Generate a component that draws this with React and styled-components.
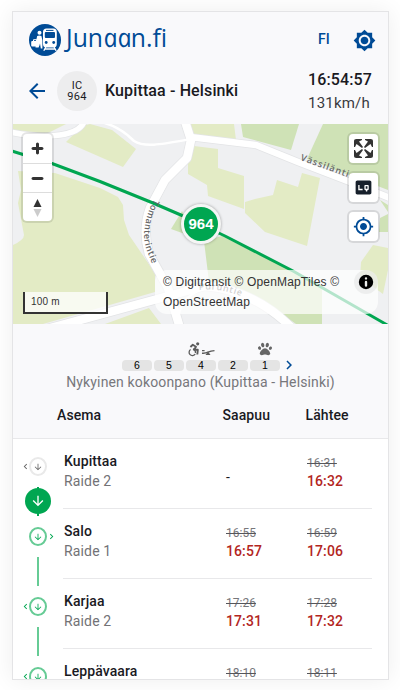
import React from "react";
import styled, { createGlobalStyle } from "styled-components";
import { FaPaw } from "react-icons/fa";
import { MdArrowBack, MdArrowDownward, MdBrightness7, MdChevronLeft, MdChevronRight, MdMyLocation } from "react-icons/md";

const BLUE = "#004b96";
const GREEN = "#00a651";

const GlobalStyle = createGlobalStyle`
  * { box-sizing: border-box; }
  body { margin: 0; background: #fff; font-family: Roboto, sans-serif; color: #1a1a1f; height: 690px; overflow: hidden; }
  svg { display: block; flex: none; }
`;

const Card = styled.main`
  width: 377px;
  height: 669px;
  margin: 11px 0 0 12px;
  border: 1px solid #e4e4e6;
  background: #fff;
  overflow: hidden;
  box-shadow: 0 0 22px rgba(0, 0, 0, 0.07);
`;

const Header = styled.header`
  height: 112px;
  background: #f9f9fb;
`;

const TopBar = styled.div`
  height: 56px;
  padding: 0 12px 0 16px;
  display: flex;
  align-items: center;
`;

const Brand = styled.div`
  display: flex;
  align-items: center;
  gap: 5px;
  color: ${BLUE};
`;

const Wordmark = styled.span`
  font: 400 26px/32px "Open Sans", sans-serif;
  transform: scaleX(0.95);
  transform-origin: left;
  white-space: nowrap;
  margin-top: -7px;
`;

const Upright = styled.em`
  display: inline-block;
  transform: skewX(12deg);
`;

const Language = styled.button`
  margin: -2px 23px 0 auto;
  padding: 0;
  border: 0;
  background: none;
  color: ${BLUE};
  font: 500 14px/20px Roboto, sans-serif;
  letter-spacing: 0.2px;
`;

const TrainBar = styled.div`
  height: 46px;
  padding: 0 16px 0 12px;
  display: flex;
  align-items: center;
`;

const TrainBadge = styled.div`
  width: 40px;
  height: 40px;
  margin: 0 8px;
  border-radius: 50%;
  background: #ededee;
  display: flex;
  flex-direction: column;
  justify-content: center;
  text-align: center;
  font-size: 11px;
  line-height: 11px;
  letter-spacing: 0.25px;
`;

const Route = styled.h1`
  margin: -1px 0 0;
  font-size: 16px;
  font-weight: 500;
  line-height: 24px;
  letter-spacing: 0.13px;
`;

const Status = styled.div`
  width: 64px;
  margin: -1px 0 0 auto;
  font-size: 16px;
  line-height: 24px;
  font-weight: 500;
  letter-spacing: 0.13px;
  white-space: nowrap;
`;

const Speed = styled.div`
  font-size: 15px;
  line-height: 22px;
  font-weight: 400;
  letter-spacing: 0.2px;
  color: #3b3b40;
`;

const MapArea = styled.section`
  position: relative;
  height: 200px;
`;

const Controls = styled.div`
  position: absolute;
  top: 10px;
  ${(p) => (p.$side === "left" ? "left: 10px;" : "right: 10px;")}
  display: flex;
  flex-direction: column;
  gap: 10px;
`;

const ControlGroup = styled.div`
  border-radius: 4px;
  background: #fff;
  box-shadow: 0 0 0 2px rgba(0, 0, 0, 0.1);
`;

const ControlButton = styled.button`
  width: 29px;
  height: 29px;
  padding: 0;
  border: 0;
  background: none;
  color: ${BLUE};
  display: flex;
  align-items: center;
  justify-content: center;
  & + & { border-top: 1px solid #ddd; }
`;

const TrainMarker = styled.div`
  position: absolute;
  left: 168px;
  top: 80px;
  width: 40px;
  height: 40px;
  border: 3px solid #f5f6f5;
  border-radius: 50%;
  background: ${GREEN};
  box-shadow: 0 0 3px rgba(0, 0, 0, 0.35);
  color: #fff;
  font: 700 15px/34px "Liberation Sans", sans-serif;
  text-align: center;
`;

const Scale = styled.div`
  position: absolute;
  left: 10px;
  bottom: 10px;
  width: 85px;
  height: 22px;
  padding: 0 6px;
  border: 2px solid #333;
  border-top: 0;
  background: rgba(255, 255, 255, 0.75);
  color: #333;
  font: 10px/19px "Liberation Sans", sans-serif;
  letter-spacing: 0.2px;
`;

const Attribution = styled.div`
  position: absolute;
  right: 10px;
  bottom: 10px;
  width: 223px;
  height: 44px;
  padding: 2px 0 2px 8px;
  border-radius: 12px;
  background: rgba(255, 255, 255, 0.7);
  color: #333;
  display: flex;
  justify-content: space-between;
  font: 12px/20px "Liberation Sans", sans-serif;
  letter-spacing: 0.18px;
`;

const InfoIcon = styled.svg`
  margin-top: -2px;
`;

const Composition = styled.section`
  height: 69px;
  padding-top: 16px;
  background: #f9f9fb;
`;

const Wagons = styled.div`
  height: 31px;
  padding-left: 109px;
  display: flex;
  align-items: flex-end;
  gap: 2px;
`;

const Wagon = styled.div`
  width: 30px;
  display: flex;
  flex-direction: column;
  align-items: center;
`;

const WagonIcons = styled.div`
  height: 18px;
  color: #666;
  display: flex;
  align-items: flex-start;
  justify-content: center;
`;

const WagonNumber = styled.div`
  width: 30px;
  height: 11px;
  border-radius: 4px;
  background: #e4e4e4;
  color: #000;
  text-align: center;
  font: 10.5px/11px "Liberation Sans", sans-serif;
`;

const NextWagons = styled.div`
  width: 12px;
  height: 18px;
  margin: 0 0 -3px 1px;
  color: ${BLUE};
  display: flex;
  justify-content: center;
`;

const Caption = styled.p`
  margin: 0;
  text-align: center;
  font-size: 14px;
  line-height: 22px;
  letter-spacing: 0.14px;
  color: #77777b;
`;

const StationHeader = styled.div`
  height: 46px;
  padding-left: 44px;
  border-bottom: 1px solid #e8e8ea;
  background: #f9f9fb;
  display: grid;
  grid-template-columns: 165.5px 83px 1fr;
  font-size: 14px;
  font-weight: 500;
  line-height: 44px;
  letter-spacing: 0.1px;
`;

const Stop = styled.div`
  height: 70px;
  display: grid;
  grid-template-columns: 50px 309px;
`;

const Rail = styled.div`
  position: relative;
`;

const Dot = styled.div`
  position: absolute;
  left: 16px;
  top: 18px;
  width: 18px;
  height: 19px;
  border: 2px solid ${(p) => (p.$past ? "#e9e9e9" : "#66cb95")};
  border-radius: 50%;
  color: ${(p) => (p.$past ? "#666" : GREEN)};
  display: flex;
  align-items: center;
  justify-content: center;
`;

const Door = styled.div`
  position: absolute;
  left: ${(p) => (p.$right ? 33 : 7)}px;
  top: 22px;
  color: ${(p) => (p.$past ? "#666" : GREEN)};
`;

const Track = styled.div`
  position: absolute;
  left: 24px;
  top: 48px;
  width: 2px;
  height: 29px;
  background: #66cb95;
`;

const Current = styled.div`
  position: absolute;
  z-index: 1;
  left: 12px;
  top: 49px;
  width: 26px;
  height: 26px;
  border-radius: 50%;
  background: ${GREEN};
  color: #fff;
  display: flex;
  align-items: center;
  justify-content: center;
  &::before {
    content: "";
    position: absolute;
    z-index: -1;
    left: 12px;
    top: -1px;
    width: 2px;
    height: 29px;
    background: ${GREEN};
  }
`;

const StopBody = styled.div`
  padding: 12px 0 0 1px;
  border-bottom: 1px solid #e8e8ea;
  display: grid;
  grid-template-columns: 162px 81px 1fr;
`;

const Station = styled.div`
  font-size: 14px;
  line-height: 20px;
  font-weight: 500;
  letter-spacing: 0.1px;
`;

const Platform = styled.div`
  font-size: 14px;
  line-height: 20px;
  letter-spacing: 0.15px;
  font-weight: 400;
  color: #727276;
`;

const Times = styled.div`
  padding-top: 3px;
`;

const Planned = styled.div`
  font-size: 12px;
  line-height: 18px;
  color: #77777b;
  text-decoration: line-through;
  text-decoration-color: #55555a;
`;

const Actual = styled.div`
  font-size: 14px;
  line-height: 19px;
  font-weight: 500;
  letter-spacing: 0.1px;
  color: #b3261e;
`;

const NoTime = styled.div`
  padding-top: 16px;
  font-size: 14px;
  line-height: 20px;
`;

const Logo = () => (
  <svg width="32" height="32" viewBox="0 0 32 32">
    <circle cx="16" cy="16" r="16" fill={BLUE} />
    <circle cx="10.5" cy="8.7" r="2" fill="#fff" />
    <path d="M8.2 12q2-1.2 4.2 0l1 4.3v8.1h-1.6l-.8-5-1.4 4H6.5L7 17z" fill="#fff" />
    <rect x="2.2" y="17" width="8" height="5.4" rx="1" fill="#fff" />
    <path d="M4.5 17.2v-1.5h3.2v1.5" stroke="#fff" fill="none" />
    <rect x="14" y="4.6" width="13.8" height="18.8" rx="3.5" fill="#fff" />
    <path d="M17 6.4h7.5" stroke={BLUE} />
    <rect x="15.8" y="8" width="10.2" height="6" rx="1" fill={BLUE} />
    <circle cx="17.2" cy="18.5" r="1.4" fill={BLUE} />
    <circle cx="24.7" cy="18.5" r="1.4" fill={BLUE} />
    <path d="M16.8 23l-2 3.8M25 23l2.2 3.8M15.5 25h11.2" stroke="#fff" strokeWidth="1.3" />
  </svg>
);

const CityMap = () => (
  <svg width="375" height="200" viewBox="13 124 375 200">
    <defs>
      <path id="west-street" d="M154 199Q138 231 148 253L157 277" />
      <path id="east-street" d="M300 160L364 183" />
      <path id="south-street" d="M199 290Q222 287 250 300" />
    </defs>
    <rect x="13" y="124" width="375" height="200" fill="#eff0f2" />
    <g fill="#e3ebc5">
      <path d="M13 124H66L48 133 30 136 13 130z" />
      <path d="M66 142L82 126 90 124 112 130 136 149 123 167z" />
      <path d="M18 171L55 173 100 188 118 197 123 205 124 220 129 235 155 273 155 292 36 326H13V245Q24 240 24 235L18 203 21 190z" />
      <path d="M188 124H234L236 140 192 136z" />
      <path d="M194 146L218 149V168L244 176V209L208 196 207 185 188 174V158z" />
      <path d="M245 202L255 199 273 195 277 180 298 187 302 173 320 178 307 246 265 232 245 213z" />
      <path d="M361 262L373 245 388 248V270L383 294 360 277z" />
      <path d="M105 324L149 308 161 324z" />
    </g>
    <g fill="#cfe2b6">
      <path d="M241 124H299L291 150 243 137z" />
      <path d="M323 124H388V190L307 159z" />
      <path d="M380 200L388 205V212z" />
      <path d="M380 218L388 214V232L379 232z" />
      <path d="M171 229L182 211 196 238z" />
      <path d="M204 241L222 236 322 286V324H296L262 300 210 290z" />
    </g>
    <g fill="none" stroke="#e3e4e6" strokeLinejoin="round">
      <path d="M10 132Q38 138 60 135T85 119" strokeWidth="7" />
      <path d="M184 118L191 140 187 158 165 180 150 208Q142 230 149 254L168 288 180 328" strokeWidth="10" />
      <path d="M190 137L256 145 298 162 350 182 390 198" strokeWidth="8" />
      <path d="M36 332L150 301 205 286Q254 290 293 329" strokeWidth="10" />
    </g>
    <g fill="none" stroke="#fff" strokeLinejoin="round">
      <path d="M10 132Q38 138 60 135T85 119" strokeWidth="5.5" />
      <path d="M101 122Q119 126 134 141C145 148 163 144 191 139" strokeWidth="2.5" />
      <path d="M184 118L191 140 187 158 165 180 150 208Q142 230 149 254L168 288 180 328" strokeWidth="8.5" />
      <path d="M190 137L256 145 298 162 350 182 390 198" strokeWidth="6.5" />
      <path d="M36 332L150 301 205 286Q254 290 293 329" strokeWidth="8.5" />
      <path d="M179 326Q176 300 200 290" strokeWidth="2" />
    </g>
    <path d="M10 150.5L52 163.5 100 181.5 153 203 182 215.5 225 236 293 271 390 326.5" fill="none" stroke={GREEN} strokeWidth="3" strokeLinejoin="round" />
    <g fill="#666" fontFamily="Open Sans, sans-serif" fontSize="9" fontWeight="600">
      <text letterSpacing="0.45"><textPath href="#west-street">Tomanterintie</textPath></text>
      <text letterSpacing="1"><textPath href="#east-street">Vässiläntie</textPath></text>
      <text letterSpacing="0.7"><textPath href="#south-street">Puruntie</textPath></text>
    </g>
  </svg>
);

const Glyph = ({ d, fill = "#333" }) => (
  <svg width="29" height="29" viewBox="0 0 29 29"><path fill={fill} fillRule="evenodd" d={d} /></svg>
);

const LowQuality = () => (
  <svg width="21" height="21" viewBox="0 0 24 24" fill="#17202b">
    <path fillRule="evenodd" d="M19 4H5c-1.11 0-2 .9-2 2v12c0 1.1.89 2 2 2h14c1.1 0 2-.9 2-2V6c0-1.1-.9-2-2-2zm-8 11H6V9h1.5v4.5H11V15zm7-1c0 .55-.45 1-1 1h-.75v1.5h-1.5V15H14c-.55 0-1-.45-1-1v-4c0-.55.45-1 1-1h3c.55 0 1 .45 1 1v4zm-3.5-.5h2v-3h-2v3z" />
  </svg>
);

const Wheelchair = () => (
  <svg width="13" height="15" viewBox="0 0 13 15" fill="none" stroke="#5c5c5c" strokeWidth="1.9">
    <circle cx="9.7" cy="1.8" r="1.6" fill="#5c5c5c" stroke="none" />
    <path d="M2.4 5L4.8 2.8 8 4.7 6 7.8H9.8L9.3 12.5" strokeLinejoin="round" />
    <path d="M2.6 7.5A3.3 3.3 0 1 0 7.2 12M5 6.8Q8 8 7.4 11" strokeWidth="1.3" />
  </svg>
);

const Seesaw = () => (
  <svg width="14" height="15" viewBox="0 0 14 15" fill="none" stroke="#5c5c5c" strokeWidth="1.4">
    <path d="M1 8.6H3.6M1 11.2Q4 11.6 7 10.2T13.5 8.6" />
    <path d="M7 9.5L9.5 13H4.5z" fill="#5c5c5c" stroke="none" />
  </svg>
);

const WAGONS = [
  { number: 6 },
  { number: 5 },
  { number: 4, icons: <><Wheelchair /><Seesaw /></> },
  { number: 2 },
  { number: 1, icons: <FaPaw size={14} /> },
];

const STOPS = [
  { name: "Kupittaa", platform: "Raide 2", departure: ["16:31", "16:32"], past: true },
  { name: "Salo", platform: "Raide 1", arrival: ["16:55", "16:57"], departure: ["16:59", "17:06"], right: true },
  { name: "Karjaa", platform: "Raide 2", arrival: ["17:26", "17:31"], departure: ["17:28", "17:32"] },
  { name: "Leppävaara", arrival: ["18:10"], departure: ["18:11"] },
];

const TimePair = ({ value }) =>
  value ? (
    <Times>
      <Planned>{value[0]}</Planned>
      {value[1] && <Actual>{value[1]}</Actual>}
    </Times>
  ) : (
    <NoTime>-</NoTime>
  );

const StopRow = ({ stop }) => (
  <Stop>
    <Rail>
      <Door $past={stop.past} $right={stop.right}>
        {stop.right ? <MdChevronRight size={11} /> : <MdChevronLeft size={11} />}
      </Door>
      <Dot $past={stop.past}><MdArrowDownward size={10} /></Dot>
      {stop.past ? <Current><MdArrowDownward size={16} /></Current> : <Track />}
    </Rail>
    <StopBody>
      <div>
        <Station>{stop.name}</Station>
        {stop.platform && <Platform>{stop.platform}</Platform>}
      </div>
      <TimePair value={stop.arrival} />
      <TimePair value={stop.departure} />
    </StopBody>
  </Stop>
);

export default function App() {
  return (
    <>
      <GlobalStyle />
      <Card>
        <Header>
          <TopBar>
            <Brand>
              <Logo />
              <Wordmark>Jun<Upright>aa</Upright>n.fi</Wordmark>
            </Brand>
            <Language>FI</Language>
            <MdBrightness7 size={23} color={BLUE} />
          </TopBar>
          <TrainBar>
            <MdArrowBack size={24} color={BLUE} />
            <TrainBadge><span>IC</span><span>964</span></TrainBadge>
            <Route>Kupittaa - Helsinki</Route>
            <Status>16:54:57<Speed>131km/h</Speed></Status>
          </TrainBar>
        </Header>
        <MapArea>
          <CityMap />
          <TrainMarker>964</TrainMarker>
          <Controls $side="left">
            <ControlGroup>
              <ControlButton><Glyph d="M14.5 8.5c-.75 0-1.5.75-1.5 1.5v3h-3c-.75 0-1.5.75-1.5 1.5S9.25 16 10 16h3v3c0 .75.75 1.5 1.5 1.5S16 19.75 16 19v-3h3c.75 0 1.5-.75 1.5-1.5S19.75 13 19 13h-3v-3c0-.75-.75-1.5-1.5-1.5z" /></ControlButton>
              <ControlButton><Glyph d="M10 13c-.75 0-1.5.75-1.5 1.5S9.25 16 10 16h9c.75 0 1.5-.75 1.5-1.5S19.75 13 19 13h-9z" /></ControlButton>
              <ControlButton>
                <svg width="29" height="29" viewBox="0 0 29 29">
                  <path fill="#333" d="M10.5 14l4-8 4 8h-8z" />
                  <path fill="#ccc" d="M10.5 16l4 8 4-8h-8z" />
                </svg>
              </ControlButton>
            </ControlGroup>
          </Controls>
          <Controls $side="right">
            <ControlGroup>
              <ControlButton><Glyph d="M24 16v5.5c0 1.75-.75 2.5-2.5 2.5H16v-1l3-1.5-4-5.5 1-1 5.5 4 1.5-3h1zM6 16l1.5 3 5.5-4 1 1-4 5.5 3 1.5v1H7.5C5.75 24 5 23.25 5 21.5V16h1zm7-11v1l-3 1.5 4 5.5-1 1-5.5-4L6 13H5V7.5C5 5.75 5.75 5 7.5 5H13zm11 2.5c0-1.75-.75-2.5-2.5-2.5H16v1l3 1.5-4 5.5 1 1 5.5-4 1.5 3h1V7.5z" /></ControlButton>
            </ControlGroup>
            <ControlGroup><ControlButton><LowQuality /></ControlButton></ControlGroup>
            <ControlGroup><ControlButton><MdMyLocation size={21} /></ControlButton></ControlGroup>
          </Controls>
          <Scale>100 m</Scale>
          <Attribution>
            <div>© Digitransit © OpenMapTiles ©<br />OpenStreetMap</div>
            <InfoIcon width="24" height="24" viewBox="0 0 20 20">
              <circle cx="10" cy="10" r="10" fill="#000" fillOpacity="0.05" />
              <path fillRule="evenodd" d="M4 10a6 6 0 1 0 12 0 6 6 0 1 0-12 0m5-3a1 1 0 1 0 2 0 1 1 0 1 0-2 0m0 3a1 1 0 1 1 2 0v3a1 1 0 1 1-2 0" />
            </InfoIcon>
          </Attribution>
        </MapArea>
        <Composition>
          <Wagons>
            {WAGONS.map((wagon) => (
              <Wagon key={wagon.number}>
                <WagonIcons>{wagon.icons}</WagonIcons>
                <WagonNumber>{wagon.number}</WagonNumber>
              </Wagon>
            ))}
            <NextWagons><MdChevronRight size={18} /></NextWagons>
          </Wagons>
          <Caption>Nykyinen kokoonpano (Kupittaa - Helsinki)</Caption>
        </Composition>
        <StationHeader>
          <span>Asema</span>
          <span>Saapuu</span>
          <span>Lähtee</span>
        </StationHeader>
        {STOPS.map((stop) => <StopRow key={stop.name} stop={stop} />)}
      </Card>
    </>
  );
}
